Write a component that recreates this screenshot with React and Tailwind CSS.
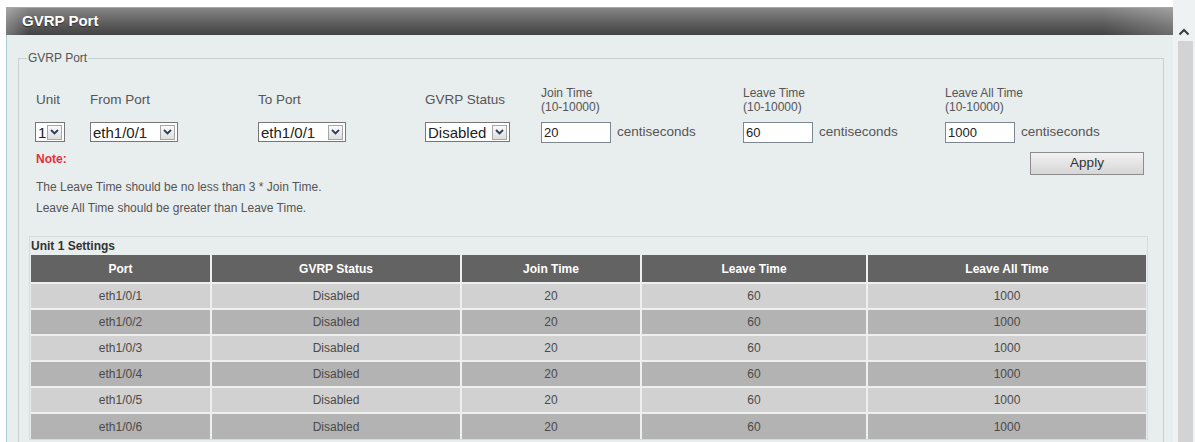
import React from "react";

const rows = [1, 2, 3, 4, 5, 6].map((n) => ({
  port: `eth1/0/${n}`,
  status: "Disabled",
  join: "20",
  leave: "60",
  leaveAll: "1000",
}));

function Chevron() {
  return (
    <svg width="9" height="6" viewBox="0 0 9 6" fill="none">
      <path d="M1 1l3.5 3.5L8 1" stroke="#2c3e5c" strokeWidth="1.8" />
    </svg>
  );
}

function Select({ value, width }) {
  return (
    <div
      className={`flex h-[20px] items-center justify-between border border-[#767676] bg-white pl-[2px] pr-[2px] ${width}`}
    >
      <span className="text-[15px] leading-none text-[#222]">{value}</span>
      <span className="flex h-[15px] w-[15px] shrink-0 items-center justify-center border border-[#a6a6a6] bg-[linear-gradient(to_bottom,#fafafa,#dedede)]">
        <Chevron />
      </span>
    </div>
  );
}

function TimeInput({ value }) {
  return (
    <div className="flex items-center gap-[6px]">
      <div className="flex h-[21px] w-[70px] items-center border border-[#7d8791] bg-white pl-[2px] text-[13px] text-[#222]">
        {value}
      </div>
      <span className="text-[13.5px] text-[#555]">centiseconds</span>
    </div>
  );
}

function RangeLabel({ name }) {
  return (
    <div className="text-[12px] leading-[14px] text-[#555]">
      <div>{name}</div>
      <div>(10-10000)</div>
    </div>
  );
}

function FieldLabel({ children }) {
  return <div className="flex h-[28px] items-center text-[13.5px] text-[#555]">{children}</div>;
}

export default function App() {
  return (
    <div className="flex h-[442px] w-[1195px] overflow-hidden bg-white font-['Liberation_Sans',Arial,sans-serif]">
      <div className="flex w-[1173px] flex-col pl-[6px] pt-[7px]">
        {/* page title bar */}
        <div className="flex h-[28px] shrink-0 items-center border-t border-[#9eabb3] bg-[linear-gradient(to_right,rgba(255,255,255,0.28),rgba(255,255,255,0)_2%,rgba(255,255,255,0)_94%,rgba(255,255,255,0.22)),linear-gradient(to_bottom,#868686,#5e5e5e_55%,#424242)] pl-[16px]">
          <span className="text-[15px] font-bold text-white [text-shadow:0_1px_1px_rgba(0,0,0,0.5)]">
            GVRP Port
          </span>
        </div>

        <div className="flex-1 border-l border-[#a8cdd6] bg-[#e8edee] pl-[11px] pr-[9px] pt-[16px]">
          <fieldset className="border border-[#c8d2d5] pb-[10px] pl-[8px] pr-[15px]">
            <legend className="px-[1px] text-[12px] leading-[14px] text-[#555]">
              GVRP Port
            </legend>

            {/* parameter form */}
            <div className="mt-[21px] grid grid-cols-[54px_168px_167px_116px_202px_202px_1fr] pl-[9px]">
              <FieldLabel>Unit</FieldLabel>
              <FieldLabel>From Port</FieldLabel>
              <FieldLabel>To Port</FieldLabel>
              <FieldLabel>GVRP Status</FieldLabel>
              <div className="flex h-[28px] items-center">
                <RangeLabel name="Join Time" />
              </div>
              <div className="flex h-[28px] items-center">
                <RangeLabel name="Leave Time" />
              </div>
              <div className="flex h-[28px] items-center">
                <RangeLabel name="Leave All Time" />
              </div>

              <div className="mt-[8px] -ml-[1px]">
                <Select value="1" width="w-[30px]" />
              </div>
              <div className="mt-[8px]">
                <Select value="eth1/0/1" width="w-[88px]" />
              </div>
              <div className="mt-[8px]">
                <Select value="eth1/0/1" width="w-[88px]" />
              </div>
              <div className="mt-[8px]">
                <Select value="Disabled" width="w-[85px]" />
              </div>
              <div className="mt-[8px]">
                <TimeInput value="20" />
              </div>
              <div className="mt-[8px]">
                <TimeInput value="60" />
              </div>
              <div className="mt-[8px]">
                <TimeInput value="1000" />
              </div>
            </div>

            {/* notes and apply */}
            <div className="mt-[9px] flex items-start justify-between">
              <div className="pl-[9px]">
                <div className="text-[12px] font-bold leading-[14px] text-[#e2303d]">Note:</div>
                <div className="mt-[11px] text-[12px] leading-[21px] text-[#555]">
                  The Leave Time should be no less than 3 * Join Time.
                </div>
                <div className="text-[12px] leading-[21px] text-[#555]">
                  Leave All Time should be greater than Leave Time.
                </div>
              </div>
              <button className="mr-[4px] h-[23px] w-[114px] border border-[#8c8c8c] bg-[linear-gradient(to_bottom,#f2f2f2,#d6d6d6)] text-[13.5px] text-[#333]">
                Apply
              </button>
            </div>

            {/* unit settings table */}
            <div className="ml-[2px] mt-[17px] border border-[#d3dbdd] px-[1px]">
              <div className="text-[12px] font-bold leading-[18px] text-[#333]">
                Unit 1 Settings
              </div>
              <table className="w-[1115px] table-fixed border-collapse text-[12px]">
                <colgroup>
                  <col className="w-[180px]" />
                  <col className="w-[250px]" />
                  <col className="w-[180px]" />
                  <col className="w-[226px]" />
                  <col />
                </colgroup>
                <thead>
                  <tr className="h-[28px] bg-[#636363] text-white">
                    {["Port", "GVRP Status", "Join Time", "Leave Time", "Leave All Time"].map((h) => (
                      <th key={h} className="border-x-2 border-[#eef0f0] font-bold first:border-l-0 last:border-r-0">
                        {h}
                      </th>
                    ))}
                  </tr>
                </thead>
                <tbody>
                  {rows.map((r, i) => (
                    <tr
                      key={r.port}
                      className={`h-[26px] border-t-2 border-[#eef0f0] text-center text-[#4a4a4a] ${
                        i % 2 === 0 ? "bg-[#d1d1d1]" : "bg-[#b3b3b3]"
                      }`}
                    >
                      <td className="border-r-2 border-[#eef0f0]">{r.port}</td>
                      <td className="border-r-2 border-[#eef0f0]">{r.status}</td>
                      <td className="border-r-2 border-[#eef0f0]">{r.join}</td>
                      <td className="border-r-2 border-[#eef0f0]">{r.leave}</td>
                      <td>{r.leaveAll}</td>
                    </tr>
                  ))}
                </tbody>
              </table>
            </div>
          </fieldset>
        </div>
      </div>

      {/* vertical scrollbar */}
      <div className="flex w-[22px] flex-col items-center bg-[#eef2f2] pt-[28px]">
        <svg width="12" height="8" viewBox="0 0 12 8" fill="none">
          <path d="M1.5 6.5L6 2l4.5 4.5" stroke="#3a3a3a" strokeWidth="2" />
        </svg>
        <div className="ml-[2px] mt-[5px] w-[15px] flex-1 bg-[#d3d3d3]" />
      </div>
    </div>
  );
}
